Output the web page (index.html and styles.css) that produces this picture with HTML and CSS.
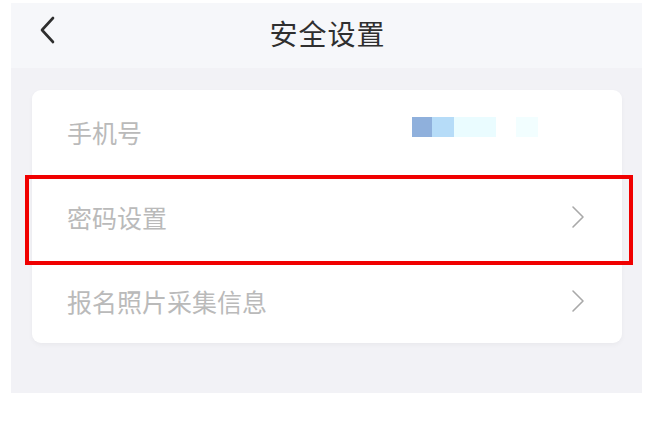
FILE: index.html
```html
<!DOCTYPE html>
<html lang="zh">
<head>
<meta charset="utf-8">
<link rel="stylesheet" href="styles.css">
</head>
<body>
<div class="screen">
  <header class="topbar">
    <svg class="back" width="20" height="30" viewBox="0 0 20 30">
      <path d="M15 3 L4 15 L15 27" fill="none" stroke="#2e2e2e" stroke-width="2.6" stroke-linecap="round" stroke-linejoin="round"/>
    </svg>
    <h1 class="title">安全设置</h1>
  </header>
  <main class="body">
    <section class="card">
      <div class="row">
        <span class="label">手机号</span>
        <span class="phone">
          <i class="px p1"></i><i class="px p2"></i><i class="px p3"></i><i class="px gap"></i><i class="px p4"></i>
        </span>
      </div>
      <div class="row highlighted">
        <span class="label">密码设置</span>
        <svg class="chev" width="14" height="24" viewBox="0 0 14 24"><path d="M2 2 L12 12 L2 22" fill="none" stroke="#a9a9a9" stroke-width="1.6" stroke-linecap="round" stroke-linejoin="round"/></svg>
      </div>
      <div class="row">
        <span class="label">报名照片采集信息</span>
        <svg class="chev" width="14" height="24" viewBox="0 0 14 24"><path d="M2 2 L12 12 L2 22" fill="none" stroke="#a9a9a9" stroke-width="1.6" stroke-linecap="round" stroke-linejoin="round"/></svg>
      </div>
    </section>
  </main>
</div>
</body>
</html>
```
FILE: styles.css
```css
html, body {
  margin: 0;
  padding: 0;
  background: #ffffff;
}
body {
  font-family: "Noto Sans CJK SC", "Noto Sans", sans-serif;
  padding: 3px 24px 0 11px;
  width: 631px;
}
.screen {
  width: 631px;
  background: #f2f2f6;
}
.topbar {
  height: 65px;
  background: #f6f7fa;
  position: relative;
  display: flex;
  align-items: center;
  justify-content: center;
}
.back {
  position: absolute;
  left: 27px;
  top: 12px;
}
.title {
  margin: -5px 0 0 0;
  font-size: 28px;
  font-weight: 400;
  color: #2f2f2f;
  letter-spacing: 1px;
  padding-left: 2px;
  line-height: 1;
}
.body {
  padding: 22px 20px 50px 21px;
}
.card {
  background: #ffffff;
  border-radius: 9px;
  box-shadow: 0 2px 5px rgba(0, 0, 0, 0.04);
  display: flex;
  flex-direction: column;
}
.row {
  height: 84px;
  display: flex;
  align-items: center;
  justify-content: space-between;
  padding: 0 37px 0 35px;
  position: relative;
}
.row:first-child { height: 85px; }
.label {
  font-size: 25px;
  color: #bababa;
  line-height: 1;
}
.highlighted::after {
  content: "";
  position: absolute;
  left: -7px;
  right: -11px;
  top: 0;
  bottom: -6px;
  border: 4px solid #f00000;
  pointer-events: none;
}
.phone {
  display: flex;
  margin-right: 47px;
  margin-top: -12px;
}
.px {
  display: block;
  height: 20px;
}
.p1 { width: 20px; background: #8fb0dc; }
.p2 { width: 22px; background: #b6dcf8; }
.p3 { width: 42px; background: #eafcff; }
.gap { width: 20px; }
.p4 { width: 22px; background: #f2feff; }
```
